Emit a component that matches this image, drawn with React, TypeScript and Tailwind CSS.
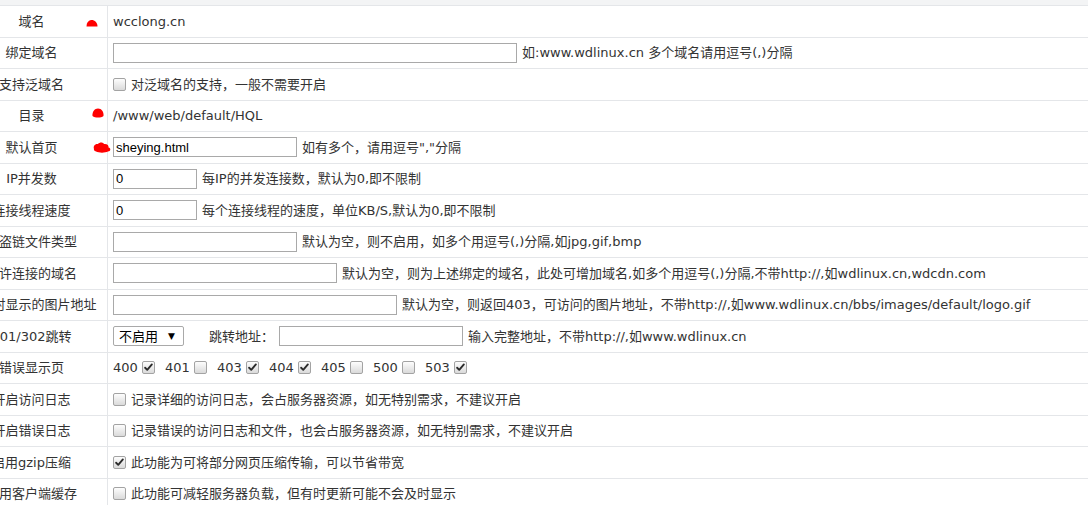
import type { ReactNode } from 'react'

const font = { fontFamily: '"DejaVu Sans", "Noto Sans CJK SC", sans-serif' }

function Box({ checked }: { checked?: boolean }) {
  return (
    <span className="inline-flex w-[13px] h-[13px] shrink-0 items-center justify-center rounded-[2px] border border-[#a3a3a3] bg-linear-to-b from-[#fdfdfd] to-[#dadada]">
      {checked && (
        <svg viewBox="0 0 13 13" className="w-[11px] h-[11px]">
          <path d="M2.5 6.8 L5 9.3 L10.5 2.8" fill="none" stroke="#2b2b2b" strokeWidth="2.2" strokeLinecap="round" strokeLinejoin="round" />
        </svg>
      )}
    </span>
  )
}

function Field({ width, value }: { width: string; value?: string }) {
  return (
    <input
      readOnly
      value={value ?? ''}
      className={`${width} h-[20px] border border-[#a9a9a9] bg-white px-[2px] text-[13px] text-black outline-none`}
      style={{ fontFamily: '"Liberation Sans", Arial, sans-serif' }}
    />
  )
}

function Row({ label, mark, children }: { label: string; mark?: ReactNode; children: ReactNode }) {
  return (
    <div className="flex h-[31.5px] border-b border-[#e4e6e9]">
      <div className="relative flex w-[108px] shrink-0 items-center border-r border-[#e4e6e9]">
        <div className="flex w-[63px] justify-center whitespace-nowrap">{label}</div>
        {mark}
      </div>
      <div className="flex items-center whitespace-nowrap pl-[5px]">{children}</div>
    </div>
  )
}

const codes: [string, boolean][] = [
  ['400', true],
  ['401', false],
  ['403', true],
  ['404', true],
  ['405', false],
  ['500', false],
  ['503', true],
]

export default function App() {
  return (
    <div className="w-[1088px] h-[505px] overflow-hidden bg-white text-[13px] text-[#333]" style={font}>
      <div className="h-[6px] bg-[#f3f4f5] border-b border-[#e4e6e9]" />

      <Row
        label="域名"
        mark={
          <svg viewBox="0 0 12 8" className="absolute left-[86px] top-[13px] w-[12px] h-[8px]">
            <path d="M0.5 7.5 C0.5 4 2 1.5 5 1 C8 0.5 11.5 3 11.5 7.5 Z" fill="#f00" />
          </svg>
        }
      >
        wcclong.cn
      </Row>

      <Row label="绑定域名">
        <Field width="w-[404px]" />
        <span className="ml-[5px]">如:www.wdlinux.cn 多个域名请用逗号(,)分隔</span>
      </Row>

      <Row label="支持泛域名">
        <Box />
        <span className="ml-[5px]">对泛域名的支持，一般不需要开启</span>
      </Row>

      <Row
        label="目录"
        mark={
          <svg viewBox="0 0 12 10" className="absolute left-[92px] top-[7px] w-[12px] h-[10px]">
            <path d="M0.5 8 C0 4 2.5 0.5 6 0.5 C9.5 0.5 12 4 11.5 8 C9 10 3 10 0.5 8 Z" fill="#f00" />
          </svg>
        }
      >
        /www/web/default/HQL
      </Row>

      <Row
        label="默认首页"
        mark={
          <svg viewBox="0 0 18 11" className="absolute left-[93px] top-[10px] z-10 w-[18px] h-[11px]">
            <path d="M1 7 C0 4 2 1.5 5 2 C6.5 0 10 0 11 2 C14 1.5 16 3.5 15.5 5.5 C18 6 18 9.5 15 9.5 C12 11 6 11 3 9.5 C1.5 9 0.5 8 1 7 Z" fill="#f00" />
          </svg>
        }
      >
        <Field width="w-[184px]" value="sheying.html" />
        <span className="ml-[5px]">{'如有多个，请用逗号","分隔'}</span>
      </Row>

      <Row label="IP并发数">
        <Field width="w-[84px]" value="0" />
        <span className="ml-[5px]">每IP的并发连接数，默认为0,即不限制</span>
      </Row>

      <Row label="连接线程速度">
        <Field width="w-[84px]" value="0" />
        <span className="ml-[5px]">每个连接线程的速度，单位KB/S,默认为0,即不限制</span>
      </Row>

      <Row label="防盗链文件类型">
        <Field width="w-[184px]" />
        <span className="ml-[5px]">默认为空，则不启用，如多个用逗号(,)分隔,如jpg,gif,bmp</span>
      </Row>

      <Row label="允许连接的域名">
        <Field width="w-[224px]" />
        <span className="ml-[5px]">默认为空，则为上述绑定的域名，此处可增加域名,如多个用逗号(,)分隔,不带http://,如wdlinux.cn,wdcdn.com</span>
      </Row>

      <Row label="盗链时显示的图片地址">
        <Field width="w-[284px]" />
        <span className="ml-[5px]">默认为空，则返回403，可访问的图片地址，不带http://,如www.wdlinux.cn/bbs/images/default/logo.gif</span>
      </Row>

      <Row label="301/302跳转">
        <div className="flex h-[20px] w-[71px] items-center justify-between rounded-[2px] border border-[#a9a9a9] bg-white pl-[5px] pr-[8px] text-black">
          <span>不启用</span>
          <span className="text-[9px]">▼</span>
        </div>
        <span className="ml-[25px] inline-block w-[70px]">跳转地址：</span>
        <Field width="w-[184px]" />
        <span className="ml-[5px]">输入完整地址，不带http://,如www.wdlinux.cn</span>
      </Row>

      <Row label="错误显示页">
        {codes.map(([code, on]) => (
          <span key={code} className="mr-[10px] flex items-center gap-[6px]">
            <span className="w-[23px]">{code}</span>
            <Box checked={on} />
          </span>
        ))}
      </Row>

      <Row label="开启访问日志">
        <Box />
        <span className="ml-[5px]">记录详细的访问日志，会占服务器资源，如无特别需求，不建议开启</span>
      </Row>

      <Row label="开启错误日志">
        <Box />
        <span className="ml-[5px]">记录错误的访问日志和文件，也会占服务器资源，如无特别需求，不建议开启</span>
      </Row>

      <Row label="启用gzip压缩">
        <Box checked />
        <span className="ml-[5px]">此功能为可将部分网页压缩传输，可以节省带宽</span>
      </Row>

      <Row label="启用客户端缓存">
        <Box />
        <span className="ml-[5px]">此功能可减轻服务器负载，但有时更新可能不会及时显示</span>
      </Row>
    </div>
  )
}
